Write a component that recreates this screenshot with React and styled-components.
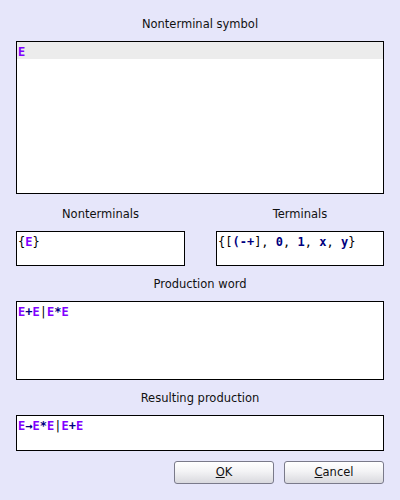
import React from "react";
import styled, { createGlobalStyle } from "styled-components";

const Global = createGlobalStyle`
  html, body { margin: 0; padding: 0; background: #e6e6fa; }
  body { width: 400px; height: 500px; overflow: hidden; }
`;

const Dialog = styled.div`
  box-sizing: border-box;
  width: 400px;
  height: 500px;
  padding: 16px 16px 0 16px;
  background: #e6e6fa;
  display: flex;
  flex-direction: column;
  font-family: "DejaVu Sans", sans-serif;
`;

const Section = styled.div`
  display: flex;
  flex-direction: column;
  margin-top: ${(p) => p.$mt || 0}px;
`;

const Label = styled.div`
  height: 16px;
  line-height: 16px;
  font-size: 11.5px;
  color: #111;
  text-align: center;
  margin-bottom: 9px;
  white-space: nowrap;
`;

const Box = styled.div`
  box-sizing: border-box;
  height: ${(p) => p.$h}px;
  border: 1px solid #000;
  background: #fff;
  overflow: hidden;
`;

const Line = styled.div`
  height: 17px;
  line-height: 20px;
  padding-left: 1px;
  font-family: "DejaVu Sans Mono", monospace;
  font-size: 12px;
  color: #000;
  white-space: pre;
  background: ${(p) => (p.$selected ? "#ececec" : "transparent")};
`;

const NT = styled.span`
  color: #8000ff;
  font-weight: bold;
`;

const T = styled.span`
  color: #000080;
  font-weight: bold;
`;

const Pair = styled.div`
  display: grid;
  grid-template-columns: 169px 168px;
  column-gap: 31px;
  margin-top: 12px;
`;

const Buttons = styled.div`
  display: flex;
  justify-content: flex-end;
  gap: 10px;
  margin-top: 10px;
`;

const Button = styled.button`
  box-sizing: border-box;
  width: 100px;
  height: 23px;
  padding: 0;
  border: 1px solid #7a7a8a;
  border-radius: 3px;
  background: linear-gradient(#ffffff 0%, #f3f3f5 45%, #d9d9de 100%);
  font-family: "DejaVu Sans", sans-serif;
  font-size: 11.5px;
  color: #111;
  text-align: center;
  line-height: 21px;
`;

const U = styled.span`
  text-decoration: underline;
`;

export default function App() {
  return (
    <>
      <Global />
      <Dialog>
        <Section>
          <Label>Nonterminal symbol</Label>
          <Box $h={153}>
            <Line $selected>
              <NT>E</NT>
            </Line>
          </Box>
        </Section>
        <Pair>
          <Section>
            <Label>Nonterminals</Label>
            <Box $h={35}>
              <Line>
                {"{"}
                <NT>E</NT>
                {"}"}
              </Line>
            </Box>
          </Section>
          <Section>
            <Label>Terminals</Label>
            <Box $h={35}>
              <Line>
                {"{["}
                <T>(-+</T>
                {"], "}
                <T>0</T>
                {", "}
                <T>1</T>
                {", "}
                <T>x</T>
                {", "}
                <T>y</T>
                {"}"}
              </Line>
            </Box>
          </Section>
        </Pair>
        <Section $mt={10}>
          <Label>Production word</Label>
          <Box $h={79}>
            <Line>
              <NT>E</NT>
              <T>+</T>
              <NT>E</NT>
              {"|"}
              <NT>E</NT>
              <T>*</T>
              <NT>E</NT>
            </Line>
          </Box>
        </Section>
        <Section $mt={10}>
          <Label>Resulting production</Label>
          <Box $h={36}>
            <Line>
              <NT>E</NT>
              <T>→</T>
              <NT>E</NT>
              <T>*</T>
              <NT>E</NT>
              {"|"}
              <NT>E</NT>
              <T>+</T>
              <NT>E</NT>
            </Line>
          </Box>
        </Section>
        <Buttons>
          <Button>
            <U>O</U>K
          </Button>
          <Button>
            <U>C</U>ancel
          </Button>
        </Buttons>
      </Dialog>
    </>
  );
}
